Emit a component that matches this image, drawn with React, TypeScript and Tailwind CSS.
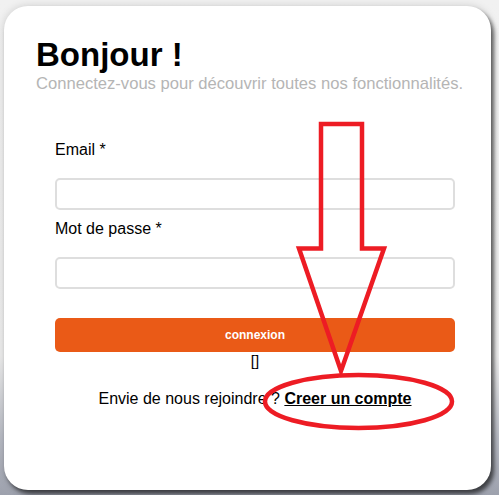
import React from "react";

// Red annotation drawn on top of the screenshot (arrow + ellipse)
const Annotation = () => (
  <svg
    className="pointer-events-none absolute inset-0"
    width={499}
    height={495}
    viewBox="0 0 499 495"
    fill="none"
  >
    <path
      d="M321 124 L362 124 L362 248.5 L384 248.5 L341 371 L299 248.5 L321 248.5 Z"
      stroke="#ed1c24"
      strokeWidth={4.5}
      strokeLinejoin="miter"
    />
    <ellipse cx={358.5} cy={401.5} rx={93.5} ry={26.5} stroke="#ed1c24" strokeWidth={4.5} />
  </svg>
);

const Field = ({ label, type, top }: { label: string; type: string; top: string }) => (
  <div className={top}>
    <label className="block text-base leading-5 text-black">{label}</label>
    <input
      type={type}
      className="mt-[18px] block h-8 w-full rounded-[5px] border-2 border-[#dedede] bg-white outline-none"
    />
  </div>
);

export default function App() {
  return (
    <div
      className="relative h-[495px] w-[499px] overflow-hidden bg-[linear-gradient(180deg,#f1f1f1_0%,#ededed_72%,#b9bcc5_88%,#9da1ad_100%)] pl-1 pt-1.5"
      style={{ fontFamily: '"Liberation Sans", Arial, sans-serif' }}
    >
      <div className="h-[484px] w-[487px] rounded-[24px] bg-white pl-8 pr-4 pt-[30px] shadow-[3px_4px_4px_rgba(0,0,0,0.6),0_0_8px_rgba(0,0,0,0.15)]">
        <h1 className="text-[33px] font-bold leading-[38px] text-black">Bonjour !</h1>
        <p className="whitespace-nowrap text-[16.6px] leading-5 text-[#b5b5b5]">
          Connectez-vous pour découvrir toutes nos fonctionnalités.
        </p>

        <form className="ml-[19px] mt-[46px] w-[400px]" onSubmit={(e) => e.preventDefault()}>
          <Field label="Email *" type="email" top="" />
          <Field label="Mot de passe *" type="password" top="mt-[9px]" />

          <button
            type="submit"
            className="mt-[29px] block h-[34px] w-full rounded-[5px] bg-[#ea5a17] text-xs font-bold text-white"
          >
            connexion
          </button>
          <div className="mt-px text-center text-[15px] leading-4 text-black">[]</div>

          <p className="mt-5 text-center text-base leading-5 text-black">
            Envie de nous rejoindre ?{" "}
            <a href="#" className="font-bold text-black underline">
              Creer un compte
            </a>
          </p>
        </form>
      </div>

      <Annotation />
    </div>
  );
}
